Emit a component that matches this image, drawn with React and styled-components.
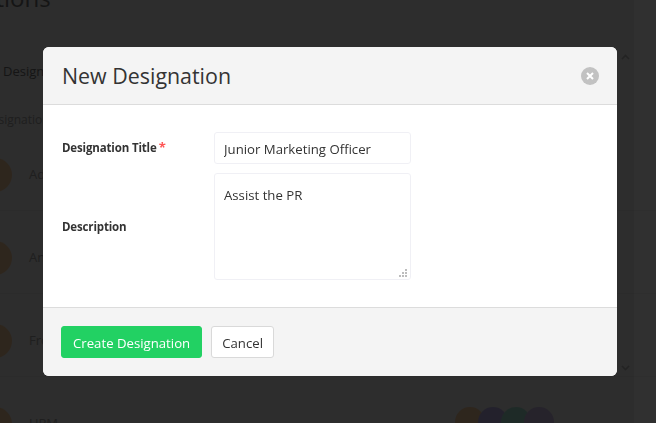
import React from "react";
import styled, { createGlobalStyle } from "styled-components";

const GlobalStyle = createGlobalStyle`
  html, body {
    margin: 0;
    height: 100%;
    overflow: hidden;
    background: #f4f4f4;
    font-family: "Open Sans", "Liberation Sans", sans-serif;
  }
  * { box-sizing: border-box; }
`;

/* page behind the dialog */
const Page = styled.div`
  width: 656px;
  height: 423px;
  overflow: hidden;
  background: #f6f6f6;
`;

const PageTitle = styled.h1`
  margin: -22px 0 0 -94px;
  font-size: 24px;
  line-height: 40px;
  font-weight: 400;
  white-space: nowrap;
  color: #777;
`;

const Tab = styled.div`
  margin: 44px 0 0 3px;
  font-size: 13px;
  line-height: 18px;
  color: #777;
`;

const SubHead = styled.div`
  margin: 31px 0 0 -17px;
  font-size: 12px;
  line-height: 18px;
  color: #aaa;
`;

const Rows = styled.div`
  margin-top: -1px;
  display: flex;
  flex-direction: column;
`;

const Row = styled.div`
  height: 83px;
  padding: 30px 0 0 0;
  margin-left: -22px;
  display: flex;
  align-items: flex-start;
  gap: 17px;
  border-bottom: 1px solid #eee;
`;

const Avatar = styled.div`
  width: 34px;
  height: 34px;
  flex: none;
  border-radius: 50%;
  background: #ffd0a0;
`;

const RowName = styled.div`
  font-size: 13px;
  line-height: 32px;
  width: 409px;
  color: #aaa;
`;

const Faces = styled.div`
  display: flex;
`;

const Face = styled.div`
  width: 30px;
  height: 30px;
  margin-right: -7px;
  border-radius: 50%;
  background: ${(p) => p.$color};
`;

/* dark layer and dialog */
const Backdrop = styled.div`
  position: fixed;
  inset: 0;
  background: rgba(0, 0, 0, 0.82);
`;

const ScrollStrip = styled.div`
  position: fixed;
  top: 0;
  right: 0;
  bottom: 0;
  width: 22px;
  background: rgba(255, 255, 255, 0.012);
`;

const Chevron = styled.svg`
  position: fixed;
  left: 621px;
  top: ${(p) => p.$top}px;
  width: 9px;
  height: 6px;
  fill: none;
  stroke: #232323;
  stroke-width: 1.6;
`;

const Dialog = styled.div`
  position: fixed;
  left: 43px;
  top: 47px;
  width: 574px;
  height: 329px;
  display: flex;
  flex-direction: column;
  overflow: hidden;
  border-radius: 6px;
  background: #fff;
`;

const Header = styled.div`
  height: 58px;
  flex: none;
  padding: 0 18px 0 19px;
  display: flex;
  align-items: center;
  justify-content: space-between;
  background: #f4f4f4;
  border-bottom: 1px solid #dcdcdc;
`;

const Title = styled.h2`
  margin: 0;
  font-size: 21.4px;
  line-height: 28px;
  font-weight: 400;
  color: #333;
`;

const CloseButton = styled.button`
  width: 18px;
  height: 18px;
  padding: 0;
  border: 0;
  border-radius: 50%;
  display: flex;
  align-items: center;
  justify-content: center;
  background: #c2c2c2;
`;

const Body = styled.div`
  flex: 1;
  padding: 27px 19px 0;
  display: flex;
  flex-direction: column;
  gap: 9px;
`;

const Field = styled.div`
  display: grid;
  grid-template-columns: 152px 197px;
  align-items: center;
`;

const Label = styled.label`
  margin-top: ${(p) => (p.$raised ? "-2px" : "0")};
  font-size: 11.5px;
  letter-spacing: -0.15px;
  line-height: 18px;
  font-weight: 700;
  color: #333;
`;

const Required = styled.span`
  margin-left: 2px;
  font-size: 13px;
  color: #f55;
`;

const TextInput = styled.input`
  width: 197px;
  height: 32px;
  padding: 2px 9px 0;
  border: 1px solid #f0f0f5;
  border-radius: 3px;
  background: #fff;
  outline: none;
  font: 400 13.2px "Open Sans", sans-serif;
  color: #333;
`;

const AreaWrap = styled.div`
  position: relative;
  width: 197px;
  height: 107px;
`;

const TextArea = styled.textarea`
  display: block;
  width: 100%;
  height: 100%;
  padding: 12px 9px;
  border: 1px solid #f0f0f5;
  border-radius: 3px;
  background: #fff;
  outline: none;
  resize: none;
  font: 400 13.2px/18px "Open Sans", sans-serif;
  color: #333;
`;

const Grip = styled.svg`
  position: absolute;
  right: 3px;
  bottom: 2px;
  width: 9px;
  height: 9px;
  fill: #bdbdbd;
`;

const Footer = styled.div`
  height: 69px;
  flex: none;
  padding: 18px 18px 0;
  display: flex;
  align-items: flex-start;
  gap: 9px;
  background: #f4f4f4;
  border-top: 1px solid #dcdcdc;
`;

const Button = styled.button`
  height: 32px;
  padding: 1px ${(p) => (p.$primary ? "11px" : "10px")} 0;
  border: 1px solid ${(p) => (p.$primary ? "#22d163" : "#d9d9d9")};
  border-radius: 3px;
  background: ${(p) => (p.$primary ? "#22d163" : "#fff")};
  color: ${(p) => (p.$primary ? "#fff" : "#333")};
  font: 400 13.2px "Open Sans", sans-serif;
`;

const rows = ["Admin", "Analyst", "Front Desk", "UPM"];
const faces = ["#ffd0a0", "#c0b8f0", "#a8e8d8", "#d0c0ec"];

export default function App() {
  return (
    <>
      <GlobalStyle />
      <Page>
        <PageTitle>Designations</PageTitle>
        <Tab>Designations</Tab>
        <SubHead>Designations</SubHead>
        <Rows>
          {rows.map((name, i) => (
            <Row key={name}>
              <Avatar />
              <RowName>{name}</RowName>
              {i === 3 && (
                <Faces>
                  {faces.map((c) => (
                    <Face key={c} $color={c} />
                  ))}
                </Faces>
              )}
            </Row>
          ))}
        </Rows>
      </Page>
      <Backdrop />
      <ScrollStrip />
      <Chevron $top={54} viewBox="0 0 9 6">
        <path d="M1 5l3.5-3.5L8 5" />
      </Chevron>
      <Chevron $top={365} viewBox="0 0 9 6">
        <path d="M1 1l3.5 3.5L8 1" />
      </Chevron>
      <Dialog>
        <Header>
          <Title>New Designation</Title>
          <CloseButton aria-label="Close">
            <svg width="8" height="8" viewBox="0 0 8 8">
              <path d="M1 1l6 6M7 1L1 7" stroke="#fff" strokeWidth="2" />
            </svg>
          </CloseButton>
        </Header>
        <Body>
          <Field>
            <Label $raised>
              Designation Title<Required>*</Required>
            </Label>
            <TextInput defaultValue="Junior Marketing Officer" />
          </Field>
          <Field>
            <Label>Description</Label>
            <AreaWrap>
              <TextArea defaultValue="Assist the PR" />
              <Grip viewBox="0 0 9 9">
                <rect x="6" y="0" width="2" height="2" />
                <rect x="3" y="3" width="2" height="2" />
                <rect x="6" y="3" width="2" height="2" />
                <rect x="0" y="6" width="2" height="2" />
                <rect x="3" y="6" width="2" height="2" />
                <rect x="6" y="6" width="2" height="2" />
              </Grip>
            </AreaWrap>
          </Field>
        </Body>
        <Footer>
          <Button $primary>Create Designation</Button>
          <Button>Cancel</Button>
        </Footer>
      </Dialog>
    </>
  );
}
